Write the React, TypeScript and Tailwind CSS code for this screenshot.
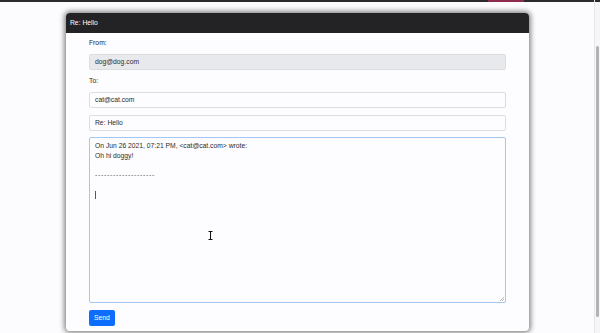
import React from "react";

const font = { fontFamily: '"Liberation Sans", Arial, sans-serif' };

const Field = ({ value, disabled }: { value: string; disabled?: boolean }) => (
  <div
    className={`h-[16px] w-full rounded-[2px] border border-[#dcdde0] px-[5px] flex items-center text-[6.75px] text-[#2a2c30] ${
      disabled ? "bg-[#e8e9ec]" : "bg-[#fdfcfe]"
    }`}
  >
    {value}
  </div>
);

export default function App() {
  return (
    <div className="w-[600px] h-[333px] bg-[#fcfbfd] overflow-hidden flex" style={font}>
      <div className="flex-1 flex flex-col relative">
        {/* top bar */}
        <div className="h-[2px] bg-[#2b2a2e] flex">
          <div className="ml-[488px] w-[36px] bg-[#8e2c50]" />
        </div>

        {/* modal */}
        <div className="ml-[66px] mt-[11px] w-[463px] rounded-[4px] bg-[#fdfcfe] shadow-[0_0_5px_2px_rgba(0,0,0,0.45)] overflow-hidden">
          <div className="h-[20px] bg-[#232225] text-white text-[6.75px] flex items-center px-[4px]">
            Re: Hello
          </div>
          <div className="pl-[23px] pr-[23px] pt-[5px] pb-[5px] flex flex-col text-[#26282c]">
            <div className="h-[10px] leading-[10px] text-[6.75px] mb-[6px]">From:</div>
            <Field value="dog@dog.com" disabled />
            <div className="h-[10px] leading-[10px] text-[6.75px] mt-[6px] mb-[6px]">To:</div>
            <Field value="cat@cat.com" />
            <div className="mt-[7px]">
              <Field value="Re: Hello" />
            </div>
            <div className="mt-[6px] h-[166px] rounded-[2px] border border-[#a3c6f3] bg-[#fdfcfe] px-[5px] pt-[3px] text-[6.75px] leading-[9.75px] text-[#2a2c30] relative">
              <div>On Jun 26 2021, 07:21 PM, &lt;cat@cat.com&gt; wrote:</div>
              <div>Oh hi doggy!</div>
              <div>&nbsp;</div>
              <div className="text-[#55575b] tracking-[0.75px]">--------------------</div>
              <div>&nbsp;</div>
              <div className="flex items-center h-[9.75px]">
                <span className="w-[1px] h-[8px] bg-[#55575b]" />
              </div>
              <svg className="absolute right-[1px] bottom-[1px]" width="5" height="5" viewBox="0 0 5 5">
                <path d="M1 5 L5 1 M3 5 L5 3" stroke="#9a9a9a" strokeWidth="0.7" />
              </svg>
            </div>
            <div className="mt-[7px]">
              <button className="h-[16px] w-[26px] rounded-[2px] bg-[#0d6efd] text-white text-[6.75px] flex items-center justify-center">
                Send
              </button>
            </div>
          </div>
        </div>

        {/* mouse I-beam cursor */}
        <svg className="absolute left-[208px] top-[231px]" width="5" height="9" viewBox="0 0 5 9">
          <path d="M0.5 0.5 H4.5 M2.5 0.5 V8.5 M0.5 8.5 H4.5" stroke="#111" strokeWidth="1" fill="none" />
        </svg>
      </div>

      {/* scrollbar */}
      <div className="w-[6px] h-full bg-[#f6f5f7] border-l border-[#e6e5e8] flex flex-col">
        <div className="h-[2px] bg-[#2b2a2e]" />
        <div className="mt-[44px] ml-[1px] w-[3px] h-[271px] rounded-[2px] bg-[#b3b3b5]" />
      </div>
    </div>
  );
}
